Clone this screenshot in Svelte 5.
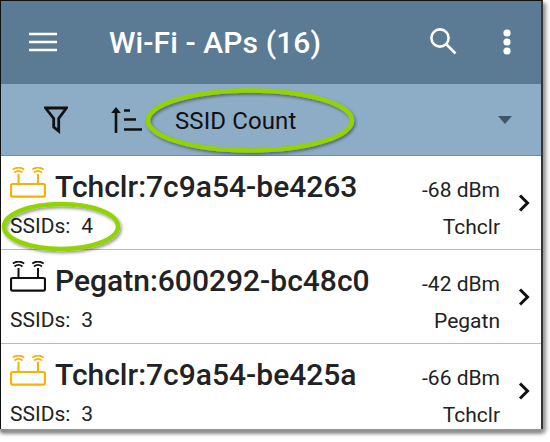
<script>
  const rows = [
    { name: 'Tchclr:7c9a54-be4263', ssids: 4, dbm: '-68 dBm', vendor: 'Tchclr', color: '#fbb000' },
    { name: 'Pegatn:600292-bc48c0', ssids: 3, dbm: '-42 dBm', vendor: 'Pegatn', color: '#111' },
    { name: 'Tchclr:7c9a54-be425a', ssids: 3, dbm: '-66 dBm', vendor: 'Tchclr', color: '#fbb000' }
  ];
</script>

<div class="page">
  <div class="frame">
    <header class="top">
      <svg class="menu" width="28" height="20" viewBox="0 0 28 20"><path d="M0 2h28M0 10h28M0 18h28" stroke="#fff" stroke-width="2.4"/></svg>
      <h1>Wi-Fi - APs (16)</h1>
      <svg class="search" width="28" height="28" viewBox="0 0 28 28" fill="none" stroke="#fff" stroke-width="2.6"><circle cx="11" cy="11" r="8.6"/><path d="M17 17l9.5 9.5"/></svg>
      <svg class="more" width="8" height="26" viewBox="0 0 8 26" fill="#fff"><circle cx="4" cy="4" r="3.6"/><circle cx="4" cy="13" r="3.6"/><circle cx="4" cy="22" r="3.6"/></svg>
    </header>
    <div class="sub">
      <svg class="filter" width="24" height="28" viewBox="0 0 24 28" fill="none" stroke="#111" stroke-width="2.8" stroke-linejoin="miter"><path d="M1.500 2h21l-7.800 10.500v12.500l-5-4v-8.500z"/></svg>
      <svg class="sort" width="31" height="26" viewBox="0 0 31 26"><path d="M5 26V5" fill="none" stroke="#111" stroke-width="2.600"/><path d="M5 0l4.800 6h-9.600z" fill="#111"/><path d="M13 3.500h6M13 12.500h12M13 22.500h18" fill="none" stroke="#111" stroke-width="2.600"/></svg>
      <span class="sort-label">SSID Count</span>
      <span class="caret"></span>
    </div>
    <div class="list">
      {#each rows as r}
        <div class="row">
          <div class="main">
            <div class="title">
              <svg class="ap" width="36" height="31" viewBox="0 0 36 31" fill="none" stroke={r.color} stroke-width="2">
                <rect x="1" y="17" width="34" height="12.600" rx="1.500" stroke-width="2.200"/>
                <path d="M8.500 17V7M28 17V7" />
                <path d="M4.500 5.500a6.500 6.500 0 0 1 8 0M24 5.500a6.500 6.500 0 0 1 8 0M2.800 2.500a10 10 0 0 1 11.400 0M22.300 2.500a10 10 0 0 1 11.400 0" stroke-width="1.700"/>
              </svg>
              <span>{r.name}</span>
            </div>
            <div class="ssids"><span>SSIDs:</span><span>{r.ssids}</span></div>
          </div>
          <div class="meta">
            <span>{r.dbm}</span>
            <span>{r.vendor}</span>
          </div>
          <svg class="chev" width="12" height="18" viewBox="0 0 12 18" fill="none" stroke="#111" stroke-width="3"><path d="M2 1.500l7.500 7.500-7.500 7.500"/></svg>
        </div>
      {/each}
    </div>
  </div>
  <svg class="ring" width="550" height="442" viewBox="0 0 550 442" fill="none">
    <defs><filter id="s" x="-10%" y="-20%" width="120%" height="150%"><feDropShadow dx="1.500" dy="2" stdDeviation="1.500" flood-color="#000" flood-opacity="0.4"/></filter></defs>
    <g filter="url(#s)" stroke="#91d400" stroke-width="4.500">
      <ellipse cx="250" cy="120.500" rx="102" ry="30"/>
      <ellipse cx="61" cy="226.500" rx="57" ry="22.500"/>
    </g>
  </svg>
</div>

<style>
  :global(body) { margin: 0; background: #fff; }
  .page { position: relative; width: 550px; height: 442px; overflow: hidden; background: #fff; font-family: Roboto, "Liberation Sans", sans-serif; }
  .frame { width: 540px; height: 428px; border-top: 1px solid #111; border-left: 1px solid #111; border-right: 2px solid #333; box-shadow: 3px 3px 4px #999, 0 4px 4px #666; overflow: hidden; background: #fff; display: flex; flex-direction: column; }
  .top { height: 83px; flex: none; background: #5b7a94; display: flex; align-items: center; padding-left: 28px; padding-right: 30px; box-sizing: border-box; }
  .top h1 { margin: 0 0 1px 52px; font-size: 30px; font-weight: 500; color: #fff; flex: 1; letter-spacing: 0.1px; }
  .menu { margin-bottom: 1px; }
  .search { margin: 0 46px 0 0; position: relative; top: -2px; }
  .more { position: relative; top: -1px; }
  .sub { height: 72px; flex: none; background: #8dacc6; display: flex; align-items: center; padding-left: 43px; padding-right: 29px; box-sizing: border-box; border-bottom: 1px solid #6c8ba6; }
  .filter { margin-right: 43px; }
  .sort { margin-right: 33px; }
  .sort-label { font-size: 24px; color: #111; flex: 1; letter-spacing: 0.1px; position: relative; top: 1px; }
  .caret { width: 0; height: 0; border-left: 7.500px solid transparent; border-right: 7.500px solid transparent; border-top: 8px solid #3f5666; }
  .list { flex: 1; }
  .row { height: 93px; box-sizing: content-box; display: flex; align-items: center; padding: 0 11px 0 9px; border-bottom: 1px solid #bbb; color: #222; }
  .main { flex: 1; display: flex; flex-direction: column; gap: 9px; }
  .title { display: flex; align-items: center; gap: 9px; font-size: 30px; font-weight: 500; height: 38px; }
  .ap { margin-top: -8px; }
  .ssids { display: flex; gap: 11px; font-size: 21px; }
  .meta { display: flex; flex-direction: column; align-items: flex-end; gap: 13px; font-size: 21px; margin-right: 18px; padding-top: 12px; }
  .chev { margin-top: 1px; }
  .ring { position: absolute; inset: 0; pointer-events: none; }
</style>
